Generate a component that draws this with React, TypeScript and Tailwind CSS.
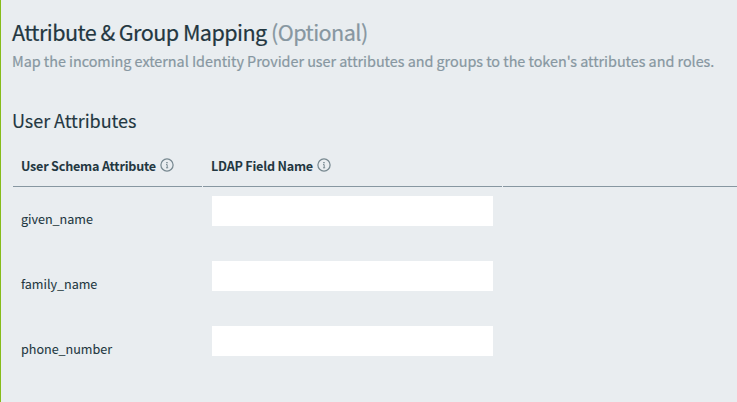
import React from "react";

function InfoIcon() {
  return (
    <svg className="mt-[2px] block h-[14px] w-[14px] shrink-0" viewBox="0 0 14 14" fill="none">
      <circle cx="7" cy="7" r="6.1" stroke="#788991" strokeWidth="1.25" />
      <rect x="6.2" y="4" width="1.5" height="1.3" fill="#788991" />
      <path d="M6 6.6h1.2v3.2M6 9.8h2.2" stroke="#788991" strokeWidth="1" />
    </svg>
  );
}

function AttributeRow({ name }: { name: string }) {
  return (
    <div className="flex h-[65px]">
      <label className="w-[191px] pt-[22px] text-[12.6px] leading-5 tracking-[-0.03px] [-webkit-text-stroke:0.08px]">
        {name}
      </label>
      <input className="mt-[9px] block h-[30px] w-[281px] bg-white outline-none" aria-label={name} />
    </div>
  );
}

export default function App() {
  return (
    <main className="h-[402px] w-[737px] overflow-hidden border-l border-[#86bc1a] bg-[#e9edf0] pl-[11px] font-['Noto_Sans_CJK_SC',sans-serif] text-[#233741]">
      <h1 className="mt-4 h-8 whitespace-nowrap text-[21.6px] leading-8 font-normal tracking-[-0.56px] [-webkit-text-stroke:0.2px]">
        Attribute &amp; Group Mapping <span className="text-[#8797a1]">(Optional)</span>
      </h1>
      <p className="mt-px h-6 whitespace-nowrap text-[14.4px] leading-6 tracking-[-0.031px] text-[#8797a1] [-webkit-text-stroke:0.2px]">
        Map the incoming external Identity Provider user attributes and groups to the token's attributes and roles.
      </p>
      <h2 className="mt-[31px] h-8 whitespace-nowrap text-[18px] leading-8 tracking-[-0.05px] [-webkit-text-stroke:0.12px]">User Attributes</h2>
      <div className="ml-px mt-5 flex h-[31px] gap-px text-[12.6px] leading-5 font-bold tracking-[-0.22px]">
        <div className="flex w-[189px] border-b border-[#8797a1] pl-2">
          <span className="w-[139px] whitespace-nowrap">User Schema Attribute</span>
          <InfoIcon />
        </div>
        <div className="flex w-[299px] border-b border-[#8797a1] pl-2">
          <span className="w-[106px] whitespace-nowrap">LDAP Field Name</span>
          <InfoIcon />
        </div>
        <div className="flex-1 border-b border-[#8797a1]" />
      </div>
      <div className="pl-[9px]">
        <AttributeRow name="given_name" />
        <AttributeRow name="family_name" />
        <AttributeRow name="phone_number" />
      </div>
    </main>
  );
}
